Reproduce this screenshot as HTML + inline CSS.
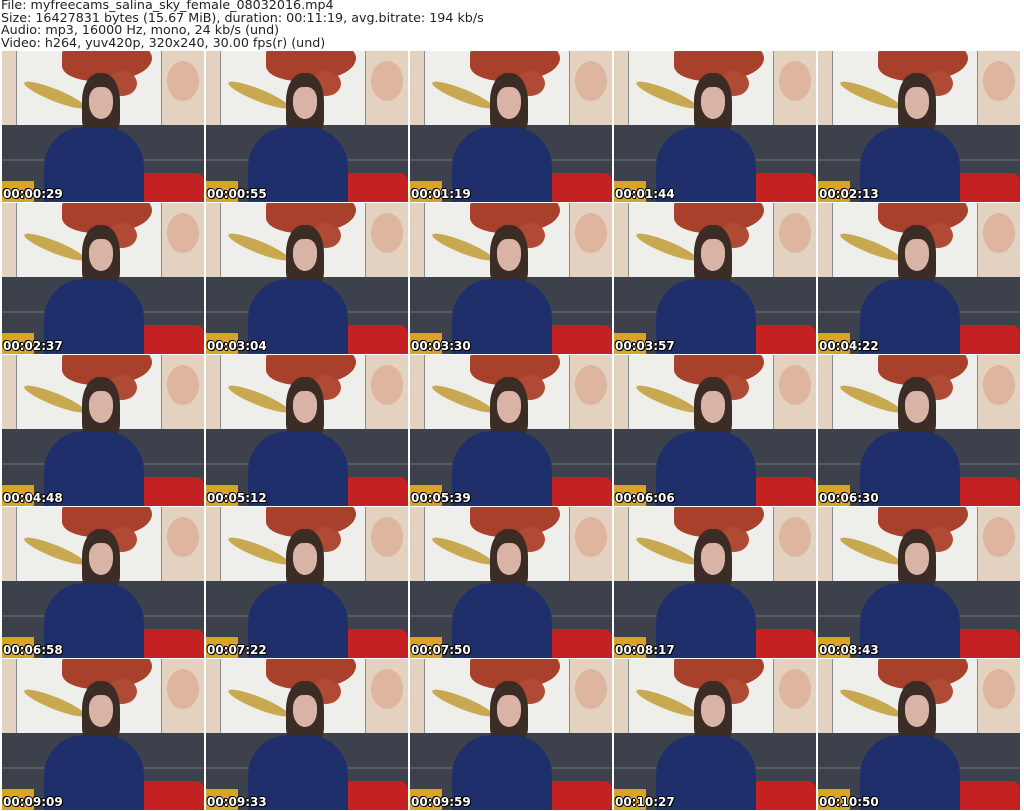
<!DOCTYPE html>
<html><head><meta charset="utf-8"><style>
body{margin:0;width:1024px;height:811px;background:#fff;position:relative;overflow:hidden;font-family:"DejaVu Sans","Liberation Sans",sans-serif}
.hd{position:absolute;left:1px;top:-1px;font-size:12.7px;line-height:12.5px;color:#222;white-space:pre}
.t{position:absolute;width:202px;height:151px;overflow:hidden;background:#e3d2bf}
.t div{position:absolute}
.fr{left:14px;top:-2px;width:144px;height:76px;background:#eeeeea;border:1px solid #8a8a8a}
.fl{left:60px;top:-12px;width:90px;height:42px;background:#a8402c;border-radius:40% 50% 60% 40%}
.fl3{left:105px;top:20px;width:30px;height:25px;background:#b04a34;border-radius:50%}
.fl2{left:20px;top:38px;width:65px;height:12px;background:#c8a850;transform:rotate(22deg);border-radius:50%}
.wp{left:165px;top:10px;width:32px;height:40px;background:#d99a80;border-radius:50%;opacity:.5}
.so{left:0;top:74px;width:202px;height:77px;background:#3d414b}
.so2{left:0;top:108px;width:202px;height:2px;background:#555a66}
.ye{left:0;top:130px;width:32px;height:21px;background:#d9a424}
.rd{left:132px;top:122px;width:70px;height:29px;background:#c42222;border-radius:8px 8px 0 0}
.dr{left:42px;top:76px;width:100px;height:90px;background:#1f2f6c;border-radius:40px 40px 10px 10px}
.hr{left:80px;top:22px;width:38px;height:62px;background:#3b2c26;border-radius:45% 45% 25% 25%}
.fa{left:87px;top:36px;width:24px;height:32px;background:#d9b4a6;border-radius:40% 40% 50% 50%}
.ts{left:1px;bottom:1px;color:#fff;font:bold 12px "DejaVu Sans",sans-serif;text-shadow:1px 0 #000,-1px 0 #000,0 1px #000,0 -1px #000,1px 1px #000,-1px -1px #000}
</style></head><body>
<div class="hd">File: myfreecams_salina_sky_female_08032016.mp4
Size: 16427831 bytes (15.67 MiB), duration: 00:11:19, avg.bitrate: 194 kb/s
Audio: mp3, 16000 Hz, mono, 24 kb/s (und)
Video: h264, yuv420p, 320x240, 30.00 fps(r) (und)</div>
<div id="g"></div>
<script>
var ts=["00:00:29","00:00:55","00:01:19","00:01:44","00:02:13","00:02:37","00:03:04","00:03:30","00:03:57","00:04:22","00:04:48","00:05:12","00:05:39","00:06:06","00:06:30","00:06:58","00:07:22","00:07:50","00:08:17","00:08:43","00:09:09","00:09:33","00:09:59","00:10:27","00:10:50"];
var xs=[2,206,410,614,818],ys=[51,203,355,507,659],h="";
for(var i=0;i<25;i++){h+='<div class="t" style="left:'+xs[i%5]+'px;top:'+ys[Math.floor(i/5)]+'px"><div class="fr"></div><div class="fl"></div><div class="fl3"></div><div class="fl2"></div><div class="wp"></div><div class="so"></div><div class="so2"></div><div class="ye"></div><div class="rd"></div><div class="hr"></div><div class="dr"></div><div class="fa"></div><div class="ts">'+ts[i]+'</div></div>';}
document.getElementById("g").innerHTML=h;
</script>
</body></html>
